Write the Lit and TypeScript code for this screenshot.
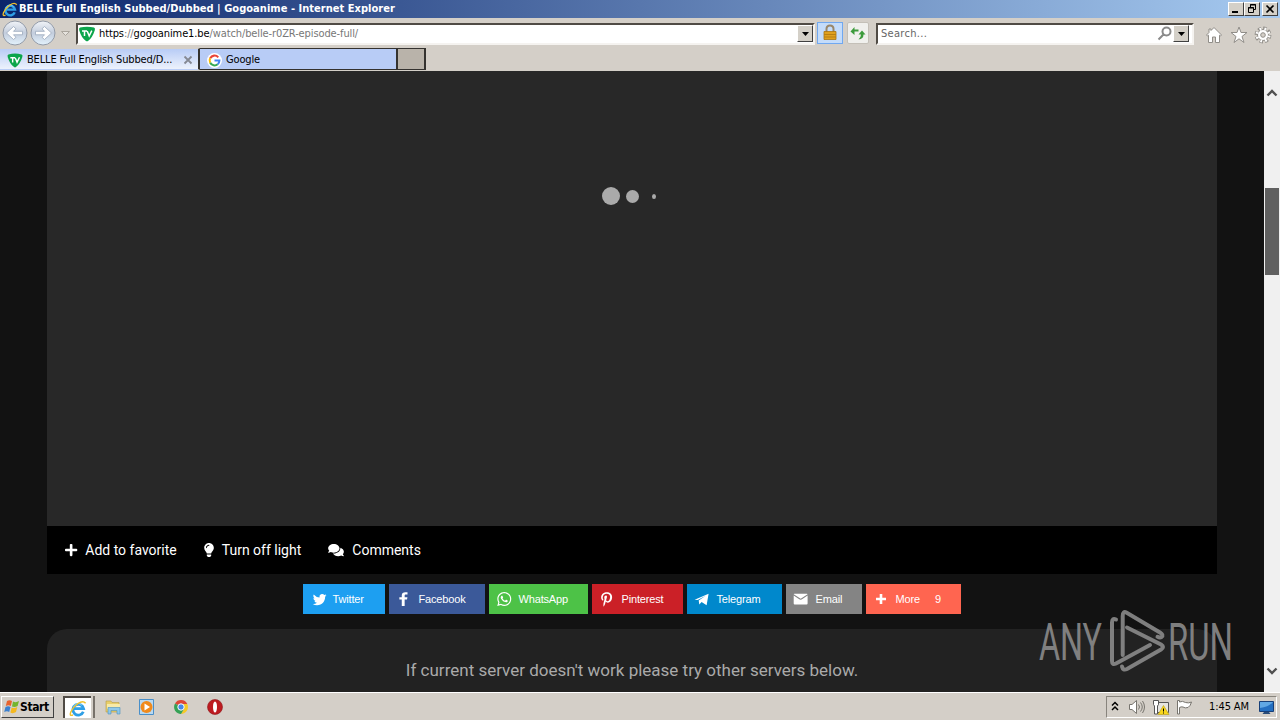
import { css, html, LitElement, svg } from "lit";
import { customElement } from "lit/decorators.js";

const plus =
	"M416 208H272V64c0-17.67-14.33-32-32-32h-32c-17.67 0-32 14.33-32 32v144H32c-17.67 0-32 14.33-32 32v32c0 17.67 14.33 32 32 32h144v144c0 17.67 14.33 32 32 32h32c17.67 0 32-14.33 32-32V304h144c17.67 0 32-14.33 32-32v-32c0-17.67-14.33-32-32-32z";
const bulb =
	"M96.06 454.35c.01 6.29 1.87 12.45 5.36 17.69l17.09 25.69a31.99 31.99 0 0 0 26.64 14.28h61.71a31.99 31.99 0 0 0 26.64-14.28l17.09-25.69a31.989 31.989 0 0 0 5.36-17.69l.04-38.35H96.01l.05 38.35zM0 176c0 44.37 16.45 84.85 43.56 115.78 16.52 18.85 42.36 58.23 52.21 91.45.04.26.07.52.11.78h160.24c.04-.26.07-.51.11-.78 9.85-33.22 35.69-72.6 52.21-91.45C335.55 260.85 352 220.37 352 176 352 78.61 272.91-.3 175.45 0 73.44.31 0 82.97 0 176zm176-80c-44.11 0-80 35.89-80 80 0 8.84-7.16 16-16 16s-16-7.16-16-16c0-61.76 50.24-112 112-112 8.84 0 16 7.16 16 16s-7.16 16-16 16z";
const comments =
	"M416 192c0-88.4-93.1-160-208-160S0 103.6 0 192c0 34.3 14.1 65.9 38 92-13.4 30.2-35.5 54.2-35.8 54.5-2.2 2.3-2.8 5.7-1.5 8.7S4.8 352 8 352c36.6 0 66.9-12.3 88.7-25 32.2 15.7 70.3 25 111.3 25 114.9 0 208-71.6 208-160zm122 220c23.9-26 38-57.7 38-92 0-66.9-53.5-124.2-129.3-148.1.9 6.6 1.3 13.3 1.3 20.1 0 105.9-107.7 192-240 192-10.8 0-21.3-.8-31.7-1.9C207.8 439.6 281.8 480 368 480c41 0 79.1-9.2 111.3-25 21.8 12.7 52.1 25 88.7 25 3.2 0 6.1-1.9 7.3-4.8 1.3-2.9.7-6.3-1.5-8.7-.3-.3-22.4-24.2-35.8-54.5z";

const shares = [
	{
		name: "Twitter",
		color: "#1d9ff1",
		width: 82,
		box: "0 0 32 32",
		path: "M27.996 10.116c-.81.36-1.68.602-2.592.71a4.526 4.526 0 0 0 1.984-2.496 9.037 9.037 0 0 1-2.866 1.095 4.513 4.513 0 0 0-7.69 4.116 12.81 12.81 0 0 1-9.3-4.715 4.49 4.49 0 0 0-.612 2.27 4.51 4.51 0 0 0 2.008 3.755 4.495 4.495 0 0 1-2.044-.564v.057a4.515 4.515 0 0 0 3.62 4.425 4.52 4.52 0 0 1-2.04.077 4.517 4.517 0 0 0 4.217 3.134 9.055 9.055 0 0 1-5.604 1.93A9.18 9.18 0 0 1 6 23.85a12.773 12.773 0 0 0 6.918 2.027c8.3 0 12.84-6.876 12.84-12.84 0-.195-.005-.39-.014-.583a9.172 9.172 0 0 0 2.252-2.336",
	},
	{
		name: "Facebook",
		color: "#3b5999",
		width: 96,
		box: "2 0 32 32",
		path: "M22 5.16c-.406-.054-1.806-.16-3.43-.16-3.4 0-5.733 1.825-5.733 5.17v2.882H9v3.913h3.837V27h4.604V16.965h3.823l.587-3.913h-4.41v-2.5c0-1.123.347-1.903 2.198-1.903H22V5.16z",
	},
	{
		name: "WhatsApp",
		color: "#4dc247",
		width: 99,
		box: "-72 -64 640 640",
		path: "M380.9 97.1C339 55.1 283.2 32 223.9 32c-122.4 0-222 99.6-222 222 0 39.1 10.2 77.3 29.6 111L0 480l117.7-30.9c32.4 17.7 68.9 27 106.1 27h.1c122.3 0 224.1-99.6 224.1-222 0-59.3-25.2-115-67.1-157zm-157 341.6c-33.2 0-65.7-8.9-94-25.7l-6.7-4-69.8 18.3L72 359.2l-4.4-7c-18.5-29.4-28.2-63.3-28.2-98.2 0-101.7 82.8-184.5 184.6-184.5 49.3 0 95.6 19.2 130.4 54.1 34.8 34.9 56.2 81.2 56.1 130.5 0 101.8-84.9 184.6-186.6 184.6zm101.2-138.2c-5.5-2.8-32.8-16.2-37.9-18-5.1-1.9-8.8-2.8-12.5 2.8-3.7 5.6-14.3 18-17.6 21.8-3.2 3.7-6.5 4.2-12 1.4-32.6-16.3-54-29.1-75.5-66-5.7-9.8 5.7-9.1 16.3-30.3 1.8-3.7.9-6.9-.5-9.7-1.4-2.8-12.5-30.1-17.1-41.2-4.5-10.8-9.1-9.3-12.5-9.5-3.2-.2-6.9-.2-10.6-.2-3.7 0-9.7 1.4-14.8 6.9-5.1 5.6-19.4 19-19.4 46.3 0 27.3 19.9 53.7 22.6 57.4 2.8 3.7 39.1 59.7 94.8 83.8 35.2 15.2 49 16.5 66.6 13.9 10.7-1.6 32.8-13.4 37.4-26.4 4.6-13 4.6-24.1 3.2-26.4-1.3-2.5-5-3.9-10.5-6.6z",
	},
	{
		name: "Pinterest",
		color: "#cb2027",
		width: 91,
		box: "-110 -110 700 700",
		path: "M204 6.5C101.4 6.5 0 74.9 0 185.6 0 256 39.6 296 63.6 296c9.9 0 15.6-27.6 15.6-35.4 0-9.3-23.7-29.1-23.7-67.8 0-80.4 61.2-137.4 140.4-137.4 68.1 0 118.5 38.7 118.5 109.8 0 53.1-21.3 152.7-90.3 152.7-24.9 0-46.2-18-46.2-43.8 0-37.8 26.4-74.4 26.4-113.4 0-66.2-93.9-54.2-93.9 25.8 0 16.8 2.1 35.4 9.6 50.7-13.8 59.4-42 147.9-42 209.1 0 18.9 2.7 37.5 4.5 56.4 3.4 3.8 1.7 3.4 6.9 1.5 50.4-69 48.6-82.5 71.4-172.8 12.3 23.4 44.1 36 69.3 36 106.2 0 153.9-103.5 153.9-196.8C384 71.3 298.2 6.5 204 6.5z",
	},
	{
		name: "Telegram",
		color: "#0088cc",
		width: 95,
		box: "0 0 20 20",
		path: "M1.600 10.700L15.600 4.700l-2 11.500-5-3.300-2.300 2.600-.6-4 7-4.800-8 4.400z",
	},
	{
		name: "Email",
		color: "#848484",
		width: 76,
		box: "0 0 20 20",
		path: "M1.700 5.200Q1.700 4.700 2.300 4.700h12.600q.7 0 .7.500L8.700 9.800zM1.700 6.500l5.200 3.600q1.800 1.200 3.500 0l5.200-3.600v8q0 1-1 1H2.700q-1 0-1-1z",
	},
	{
		name: "More",
		color: "#ff6550",
		width: 95,
		box: "0 0 20 20",
		path: "M7.700 5h2.600v3.800H14v2.500h-3.700V15H7.700v-3.700H4V8.800h3.700z",
		count: 9,
	},
];

const icon = (box: string, path: string) =>
	html`<svg viewBox=${box}><path fill="currentColor" d=${path} /></svg>`;

const ieLogo = html`<svg viewBox="0 0 18 18">
  <path fill="none" stroke="#2f9fe6" stroke-width="2.800" d="M14.300 12.800A5.400 5.400 0 1 1 14.600 9.700H5" />
  <path fill="none" stroke="#7fd2f8" stroke-width="1" d="M4.500 7.500A5 5 0 0 1 13 6.500" />
  <path fill="none" stroke="#f1c12c" stroke-width="1.500" d="M4 16Q0 17.500 1.800 13 4 8 9 4.500T16.600 4.200" />
</svg>`;

const tvLogo = html`<svg viewBox="0 0 16 16">
  <path fill="#0ca54b" d="M1 1.500Q8-.2 15 1.500q1.500.5.8 2.700Q13.300 12 9 15q-1 .7-2 0Q2.500 12 .2 4.200-.4 2 1 1.500z" />
  <path fill="none" stroke="#fff" stroke-width="1.500" d="M3 5h5M5.500 5v5M8.200 5l2 5 2.600-5.400" />
</svg>`;

const arrowCircle = (d: string) => html`<svg viewBox="0 0 26 26">
  <circle cx="13" cy="13" r="12" fill="url(#g)" stroke="#939ba8" />
  <defs>
    <linearGradient id="g" x1="0" y1="0" x2="0" y2="1">
      <stop offset="0" stop-color="#f1f4f8" /><stop offset=".5" stop-color="#c3cddd" />
      <stop offset="1" stop-color="#e3f2fc" />
    </linearGradient>
  </defs>
  <path d=${d} fill="#fff" stroke="#a3b0c2" stroke-width=".9" />
</svg>`;

const chevron = (d: string) =>
	html`<svg viewBox="0 0 16 16"><path fill="none" stroke="#505050" stroke-width="2.400" d=${d} /></svg>`;

const dropArrow = html`<svg viewBox="0 0 7 4"><path d="M0 0h7L3.500 4z" /></svg>`;

const watermarkLines = svg`
  <path d="M78 11.500q-4-2-4 3V53q0 4.500 4 2.500L112 37" />
  <path d="M84.700 47V8q0-5.500 4-3.200L122 24.500q4 2.500 1.500 4.500-1.500 1-4-.2" />
  <path d="M89 19.500l34 17q4 2.500 0 5L89 61q-4 2-5-2.500" />`;

@customElement("app-root")
export class AppRoot extends LitElement {
	static styles = css`
    :host {
      display: flex;
      flex-direction: column;
      position: relative;
      width: 1280px;
      height: 720px;
      overflow: hidden;
      background: #d4cfc8;
      color: #000;
      font: 11px/14px "DejaVu Sans Condensed", "DejaVu Sans", sans-serif;
      white-space: nowrap;
    }
    * {
      box-sizing: border-box;
    }
    svg {
      display: block;
      flex: none;
      overflow: visible;
    }
    .title {
      display: flex;
      align-items: center;
      height: 18px;
      padding: 0 2px 0 2px;
      background: linear-gradient(90deg, #0a246a, #a6caf0);
      color: #fff;
      font-weight: 700;
    }
    .title > svg {
      width: 16px;
      height: 16px;
      margin-right: 1px;
    }
    .title .caption {
      flex: 1;
      letter-spacing: 0.03px;
    }
    .win {
      width: 16px;
      height: 14px;
      background: #d4d0c8;
      border: 1px solid;
      border-color: #fff #404040 #404040 #fff;
    }
    .win:last-child {
      margin-left: 2px;
    }
    .win svg {
      width: 14px;
      height: 12px;
    }
    .nav {
      display: flex;
      align-items: center;
      height: 30px;
      padding-left: 2px;
    }
    .round {
      width: 28px;
      height: 26px;
    }
    .round svg {
      width: 26px;
      height: 26px;
    }
    .caret {
      width: 9px;
      margin: 0 6px 0 3px;
    }
    .field {
      display: flex;
      align-items: center;
      height: 22px;
      margin-top: 1px;
      background: #fff;
      border: 2px solid;
      border-color: #504b45 #f5f3f0 #f5f3f0 #504b45;
    }
    .address {
      width: 739px;
      padding-left: 1px;
      color: #777;
    }
    .address > svg {
      width: 16px;
      height: 16px;
      margin-right: 4px;
    }
    .address .url {
      flex: 1;
      letter-spacing: -0.11px;
    }
    .url b {
      color: #000;
      font-weight: 400;
    }
    .drop {
      display: flex;
      align-items: center;
      justify-content: center;
      width: 16px;
      height: 17px;
      background: #d4d0c8;
      border: 1px solid;
      border-color: #fff #404040 #404040 #fff;
    }
    .drop svg {
      width: 7px;
      height: 4px;
    }
    .lock,
    .refresh {
      width: 26px;
      height: 22px;
      background: #c4dcfa;
      border: 1px solid #70a8f0;
    }
    .lock {
      margin: 0 4px 0 2px;
    }
    .refresh {
      width: 22px;
      background: #f0f0ed;
      border-color: #c4c0b8;
      border-radius: 2px;
    }
    .lock svg {
      width: 24px;
      height: 20px;
    }
    .refresh svg {
      width: 20px;
      height: 20px;
    }
    .search {
      width: 318px;
      margin: 1px 11px 0 7px;
      padding: 0 3px 0 3px;
      color: #666;
    }
    .search span {
      flex: 1;
      letter-spacing: 0.3px;
    }
    .search > svg {
      width: 15px;
      height: 15px;
      margin-right: 1px;
    }
    .tools {
      display: flex;
      gap: 6.500px;
      padding-top: 4px;
    }
    .tools svg {
      width: 18px;
      height: 18px;
    }
    .tabs {
      display: flex;
      height: 23px;
      padding-bottom: 1px;
    }
    .tab {
      display: flex;
      align-items: center;
      width: 198px;
      height: 22px;
      padding: 2px 6px 0 7px;
      background: #b8ccf6;
      border: 1px solid #34322f;
      border-width: 1px 2px 1px 0;
    }
    .tab svg {
      width: 15px;
      height: 15px;
      margin-right: 4px;
    }
    .tab.active {
      width: 200px;
      padding: 2px 5px 0 7px;
      background: linear-gradient(#b8ccf6, #edf2fc);
      border-color: #d4cfc8 #34322f transparent;
    }
    .tab.active svg {
      width: 16px;
    }
    .tab .text {
      flex: 1;
      letter-spacing: -0.17px;
    }
    .tab.active .close {
      width: 8px;
      height: 8px;
      margin: 0 1px 0 0;
    }
    .tab.new {
      width: 28px;
      background: #b9b3aa;
    }
    .view {
      display: flex;
      height: 621px;
    }
    .page {
      width: 1264px;
      height: 621px;
      padding: 0 47px;
      overflow: hidden;
      background: #121212;
      color: #fff;
      font-family: Roboto, sans-serif;
    }
    .player {
      display: flex;
      align-items: center;
      height: 455px;
      padding: 0 0 205px 555px;
      background: #282828;
    }
    .dot {
      border-radius: 50%;
      background: #aaa;
    }
    .dot.large {
      width: 18px;
      height: 18px;
    }
    .dot.medium {
      width: 13px;
      height: 13px;
      margin: 0 13px 0 6px;
    }
    .dot.small {
      width: 4px;
      height: 5px;
    }
    .actions {
      display: flex;
      align-items: center;
      height: 48px;
      padding: 0 18px;
      background: #000;
      font-size: 14px;
      line-height: 20px;
    }
    .actions svg {
      height: 14px;
      margin-right: 8px;
    }
    .actions span {
      margin-right: 27px;
    }
    .plus {
      width: 12.250px;
    }
    .bulb svg {
      width: 10px;
    }
    .talk svg {
      width: 16px;
    }
    .shares {
      display: flex;
      justify-content: center;
      gap: 4px;
      padding: 10px 0 15px;
      font: 11px/30px "Liberation Sans", sans-serif;
      letter-spacing: -0.16px;
    }
    .share {
      display: flex;
      align-items: center;
      height: 30px;
      padding-left: 5.500px;
    }
    .share svg {
      width: 20px;
      height: 20px;
      margin-right: 4px;
    }
    .share .count {
      margin-left: 15px;
    }
    .servers {
      height: 100px;
      padding-top: 29px;
      border-radius: 20px;
      background: #222;
      color: #aaa;
      font-size: 17px;
      line-height: 24px;
      text-align: center;
    }
    .scroll {
      display: flex;
      flex-direction: column;
      width: 16px;
      height: 621px;
      padding: 14px 0 13px;
      background: #f0f0f0;
    }
    .scroll svg {
      width: 16px;
      height: 16px;
    }
    .thumb {
      height: 87px;
      margin: 87px 1px auto;
      background: #606060;
    }
    .taskbar {
      display: flex;
      align-items: center;
      height: 28px;
      padding: 1px 3px 0 1px;
      border-top: 1px solid #fff;
    }
    .start {
      display: flex;
      align-items: center;
      width: 53px;
      height: 22px;
      padding-left: 2px;
      border: 1px solid;
      border-color: #fff #404040 #404040 #fff;
      font-size: 12px;
      font-weight: 700;
      letter-spacing: -0.4px;
    }
    .start svg {
      width: 16px;
      height: 16px;
    }
    .task {
      display: flex;
      align-items: center;
      justify-content: center;
      width: 34px;
      height: 22px;
    }
    .task svg {
      width: 18px;
      height: 18px;
    }
    .task.on {
      width: 28px;
      margin: 0 6px 0 9px;
      background: #fff;
      border: 1px solid #504b45;
      border-width: 2px 0 0 2px;
    }
    .on-edge {
      width: 2px;
      height: 22px;
      margin: 0 1px 0 -4px;
      background: #77726b;
    }
    .tray {
      display: flex;
      align-items: center;
      width: 171px;
      height: 22px;
      margin-left: auto;
      padding-left: 4px;
      border: 1px solid;
      border-color: #88847d #fff #fff #88847d;
    }
    .tray svg {
      width: 18px;
      height: 18px;
      margin-right: 6px;
    }
    .tray .up {
      width: 8px;
      margin-right: 9px;
    }
    .tray .clock {
      width: 43px;
      margin: 0 9px 0 9px;
      letter-spacing: -0.1px;
    }
    .watermark {
      position: absolute;
      left: 1038px;
      top: 608px;
      width: 194px;
      height: 66px;
      fill: #888;
      opacity: 0.92;
      font: 400 51px Roboto, sans-serif;
    }
    .watermark g {
      fill: none;
      stroke: #888;
      stroke-width: 4;
      stroke-linecap: round;
    }
  `;

	render() {
		return html`
      <div class="title">
        ${ieLogo}
        <span class="caption">BELLE Full English Subbed/Dubbed | Gogoanime - Internet Explorer</span>
        <div class="win"><svg viewBox="0 0 14 12"><path d="M3 8h6v2H3z" /></svg></div>
        <div class="win">
          <svg viewBox="0 0 14 12"><path fill="none" stroke="#000" d="M5.500 4V1.500h5v5H9M5 2h6M3.500 4.500h5v5h-5zM3 5h6" /></svg>
        </div>
        <div class="win"><svg viewBox="0 0 14 12"><path stroke="#000" stroke-width="1.700" d="M3.500 2.500l7 7m0-7l-7 7" /></svg></div>
      </div>
      <div class="nav">
        <div class="round">${arrowCircle("M4.500 13l7-6.500 2.500 2.300-2.500 2.500h9v3.500h-9l2.500 2.500-2.500 2.200z")}</div>
        <div class="round">${arrowCircle("M21.500 13l-7-6.500L12 8.800l2.500 2.500h-9v3.500h9L12 17.300l2.500 2.200z")}</div>
        <svg class="caret" viewBox="0 0 9 5"><path fill="#e6e3de" stroke="#aaa59d" d="M.5.500h8l-4 4z" /></svg>
        <div class="field address">
          ${tvLogo}
          <span class="url"><b>https</b>://<b>gogoanime1.be</b>/watch/belle-r0ZR-episode-full/</span>
          <div class="drop">${dropArrow}</div>
        </div>
        <div class="lock">
          <svg viewBox="0 0 24 20">
            <path fill="none" stroke="#99876a" stroke-width="2" d="M8.500 10V6q0-3.500 3.500-3.500T15.500 6v4" />
            <path fill="#e0a01c" stroke="#a97510" stroke-width=".8" d="M6 8.500h12v8H6z" />
            <path stroke="#b87f11" d="M6 11.500h12M6 14h12" />
          </svg>
        </div>
        <div class="refresh">
          <svg viewBox="0 0 19 20">
            <path fill="#3c9b3c" d="M2 8.500l4-4.500v2.500h4v2H6V12zM17 11.500L13.500 7.500 10 11.500h2.500q0 3-2.500 5 5-.5 5-5z" />
          </svg>
        </div>
        <div class="field search">
          <span>Search...</span>
          <svg viewBox="0 0 15 15"><path fill="none" stroke="#8a8a8a" stroke-width="2" d="M1.500 13.500l5-5M5.500 5.500a4 4 0 1 0 8 0 4 4 0 1 0-8 0" /></svg>
          <div class="drop">${dropArrow}</div>
        </div>
        <div class="tools">
          <svg viewBox="0 0 18 18"><path fill="#fff" stroke="#918e89" d="M9 1.500l7.500 7.500-1 1-1-.8v7.300h-4V11h-3v5.500h-4V9.200l-1 .8-1-1L4 6.500V3h2v1.500z" /></svg>
          <svg viewBox="0 0 18 18"><path fill="#fff" stroke="#918e89" d="M9 1l2 5.500h6l-5 4 2 6-5-3.700-5 3.700 2-6-5-4h6z" /></svg>
          <svg viewBox="0 0 18 18">
            <circle cx="9" cy="9" r="6.700" fill="none" stroke="#918e89" stroke-width="3.400" stroke-dasharray="3.300 1.962" />
            <circle cx="9" cy="9" r="5.500" fill="#fff" stroke="#918e89" />
            <circle cx="9" cy="9" r="6.200" fill="none" stroke="#fff" stroke-width="2.800" stroke-dasharray="1.700 3.170" stroke-dashoffset="-.7" />
            <circle cx="9" cy="9" r="2.300" fill="#d4cfc8" stroke="#918e89" />
          </svg>
        </div>
      </div>
      <div class="tabs">
        <div class="tab active">
          ${tvLogo}
          <span class="text">BELLE Full English Subbed/D...</span>
          <svg class="close" viewBox="0 0 8 8"><path stroke="#858993" stroke-width="1.800" d="M.5.500l7 7m0-7l-7 7" /></svg>
        </div>
        <div class="tab">
          <svg viewBox="0 0 16 16">
            <circle cx="8" cy="8" r="8" fill="#fff" />
            <g fill="none" stroke-width="2.200">
              <path stroke="#ea4335" d="M12 4.600A5.200 5.200 0 0 0 3.400 5.600" />
              <path stroke="#fbbc05" d="M3.400 5.600a5.200 5.200 0 0 0 0 4.800" />
              <path stroke="#34a853" d="M3.400 10.400a5.200 5.200 0 0 0 8 1.600" />
              <path stroke="#4285f4" d="M11.400 12Q13.200 10.500 13.200 8H8" />
            </g>
          </svg>
          <span class="text">Google</span>
        </div>
        <div class="tab new"></div>
      </div>
      <div class="view">
        <div class="page">
          <div class="player">
            <div class="dot large"></div>
            <div class="dot medium"></div>
            <div class="dot small"></div>
          </div>
          <div class="actions">
            <svg class="plus" viewBox="0 0 448 512"><path fill="currentColor" d=${plus} /></svg>
            <span>Add to favorite</span>
            <div class="bulb">${icon("0 0 352 512", bulb)}</div>
            <span>Turn off light</span>
            <div class="talk">${icon("0 0 576 512", comments)}</div>
            <span>Comments</span>
          </div>
          <div class="shares">
            ${shares.map(
							(s) => html`<div class="share" style="width:${s.width}px;background:${s.color}">
                ${icon(s.box, s.path)}
                <span>${s.name}</span>
                ${s.count ? html`<span class="count">${s.count}</span>` : ""}
              </div>`,
						)}
          </div>
          <div class="servers">If current server doesn't work please try other servers below.</div>
        </div>
        <div class="scroll">
          ${chevron("M3.500 10.500L8 6l4.500 4.500")}
          <div class="thumb"></div>
          ${chevron("M3.500 5.500L8 10l4.500-4.500")}
        </div>
      </div>
      <div class="taskbar">
        <div class="start">
          <svg viewBox="0 0 16 16">
            <path fill="#e8622c" d="M3 2q2.500-1.500 5 0L6.800 7Q4.500 5.700 1.800 7z" />
            <path fill="#74b52e" d="M9 2.500q3 1.500 6-.5l-1.400 5q-3 1.700-5.600.5z" />
            <path fill="#3b80cf" d="M1.500 8q2.700-1.500 5 0l-1.300 5Q3 11.500.2 13z" />
            <path fill="#f4b81f" d="M7.700 8.500q2.800 1.400 5.600-.4L12 13q-3 2-5.600.5z" />
          </svg>
          Start
        </div>
        <div class="task on">${ieLogo}</div>
        <div class="on-edge"></div>
        <div class="task">
          <svg viewBox="0 0 18 18">
            <path fill="#e9cf6a" stroke="#b69c48" stroke-width=".6" d="M2 3h5l1 1.500h7V14H2z" />
            <path fill="#f7eaa9" d="M3 6h13v5H3z" />
            <path fill="#8fc8ea" stroke="#4b91bd" stroke-width=".6" d="M4 16V9.500h12V16h-3v-3.500H7V16z" />
          </svg>
        </div>
        <div class="task">
          <svg viewBox="0 0 18 18">
            <path fill="#b9d9f1" stroke="#498fc9" d="M1.500 1.500h14v15h-14z" />
            <circle cx="8.500" cy="9" r="6" fill="#f08a1c" />
            <path fill="#fff" d="M6.500 5.500L12 9l-5.500 3.500z" />
          </svg>
        </div>
        <div class="task">
          <svg viewBox="0 0 18 18">
            <path fill="#de4636" d="M9 9L3 5.500A7 7 0 0 1 15.300 6H9z" />
            <path fill="#f6c927" d="M9 9V6h6.300A7 7 0 0 1 9 16l3-5z" />
            <path fill="#35a155" d="M9 9l3 2-3 5A7 7 0 0 1 3 5.500z" />
            <circle cx="9" cy="9" r="3.200" fill="#4688e8" stroke="#fff" />
          </svg>
        </div>
        <div class="task">
          <svg viewBox="0 0 18 18">
            <circle cx="9" cy="9" r="7.500" fill="#bd1b20" stroke="#8f1519" stroke-width=".6" />
            <ellipse cx="9" cy="9" rx="2" ry="5.500" fill="#fff" />
          </svg>
        </div>
        <div class="tray">
          <svg class="up" viewBox="0 0 8 18"><path fill="none" stroke="#000" stroke-width="1.500" d="M1 7.500l3-3 3 3M1 12l3-3 3 3" /></svg>
          <svg viewBox="0 0 18 18">
            <path fill="#fff" stroke="#77746e" d="M1.500 6.500H4l4.500-4v13L4 11.500H1.500z" />
            <path fill="none" stroke="#77746e" d="M10.500 6.500q2 2.500 0 5M12.500 4.500q3.500 4.500 0 9M14.500 3q4 6 0 12" />
          </svg>
          <svg viewBox="0 0 18 18">
            <path fill="#e5e4e0" stroke="#555" d="M5.500 4.500h11v10h-11z" />
            <path fill="#fff" stroke="#555" d="M1.500 2.500h5v4l-1 1.500v8h-3V8l-1-1.500z" />
            <path fill="#f9d71c" stroke="#b69a13" stroke-width=".6" d="M11.500 7.500L17 16.500H6z" />
            <path stroke="#000" d="M11.500 10.500v3m0 1v1" />
          </svg>
          <svg viewBox="0 0 18 18"><path fill="#fff" stroke="#77746e" d="M1.500 16V2.500h2V4q3-1.500 6 .5 3 1 6-.5-1 4-3.500 5.500-3 1-5-.5-2-.5-3.500.5v6.500z" /></svg>
          <span class="clock">1:45 AM</span>
          <svg viewBox="0 0 18 18">
            <path fill="#246fc1" stroke="#173f78" d="M1.500 3.500h14v10h-14z" />
            <path fill="#60a7e4" d="M2 4h13q-4 5-13 6z" />
            <path fill="#294c79" d="M6 14h5l1.500 2h-8z" />
          </svg>
        </div>
      </div>
      <svg class="watermark" viewBox="0 0 194 66">
        <text x="1" y="52" textLength="63" lengthAdjust="spacingAndGlyphs">ANY</text>
        <g>${watermarkLines}</g>
        <text x="130" y="52" textLength="65" lengthAdjust="spacingAndGlyphs">RUN</text>
      </svg>
    `;
	}
}
